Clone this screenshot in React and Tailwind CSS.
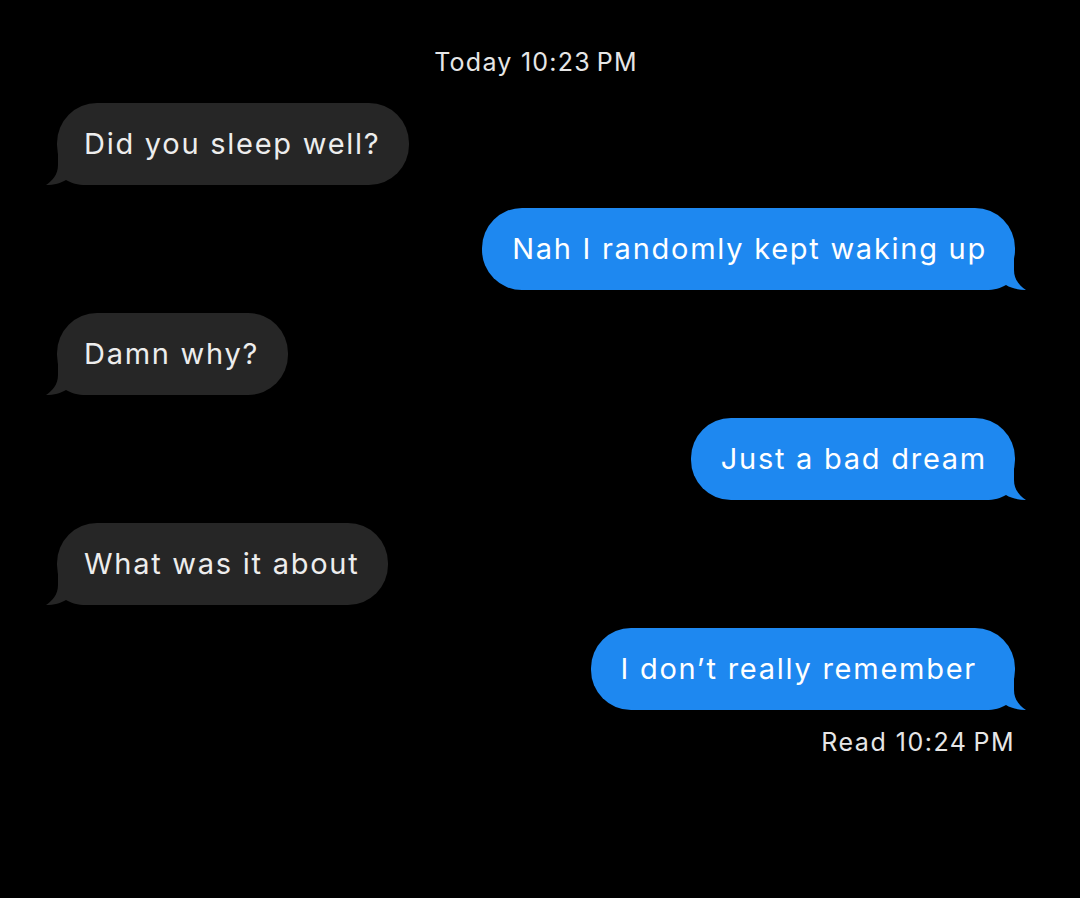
import React from "react";

const GRAY = "#262626";
const BLUE = "#1e88f0";

function Tail({ color, side }) {
  const cls =
    side === "left"
      ? "absolute left-[-11px] bottom-0"
      : "absolute right-[-11px] bottom-0 -scale-x-100";
  return (
    <svg className={cls} width="54" height="40" viewBox="0 0 54 40" aria-hidden="true">
      <path
        d="M12 0 L12 20 C12 30 6 36 0 40 C8 40 15 38 20 35 C25 38 32 40 40 40 L54 40 L54 0 Z"
        fill={color}
      />
    </svg>
  );
}

function Received({ text }) {
  return (
    <div className="flex justify-start">
      <div className="relative flex h-[82px] items-center rounded-[40px] bg-[#262626] pl-[27px] pr-[29px] text-[#ededed]">
        <Tail color={GRAY} side="left" />
        <span className="relative">{text}</span>
      </div>
    </div>
  );
}

function Sent({ text, wide }) {
  return (
    <div className="flex justify-end">
      <div
        className={
          wide
            ? "relative flex h-[82px] items-center rounded-[40px] bg-[#1e88f0] pl-[30px] pr-[38px] text-white"
            : "relative flex h-[82px] items-center rounded-[40px] bg-[#1e88f0] pl-[30px] pr-[28px] text-white"
        }
      >
        <Tail color={BLUE} side="right" />
        <span className="relative">{text}</span>
      </div>
    </div>
  );
}

export default function App() {
  return (
    <div
      className="h-[898px] w-[1080px] overflow-hidden bg-black pl-[57px] pr-[65px]"
      style={{ fontFamily: 'Inter, "Liberation Sans", Arial, sans-serif' }}
    >
      <div className="pt-[47px] text-center text-[25px] leading-[30px] tracking-[0.05em] text-[#e6e6e6]">
        Today 10:23&#8201;PM
      </div>
      <div className="mt-[26px] flex flex-col gap-[23px] text-[29px] tracking-[0.06em]">
        <Received text="Did you sleep well?" />
        <Sent text="Nah I randomly kept waking up" />
        <Received text="Damn why?" />
        <Sent text="Just a bad dream" />
        <Received text="What was it about" />
        <Sent text="I don’t really remember" wide />
      </div>
      <div className="mt-[17px] text-right text-[25px] leading-[30px] tracking-[0.06em] text-[#e6e6e6]">
        Read 10:24&#8201;PM
      </div>
    </div>
  );
}
